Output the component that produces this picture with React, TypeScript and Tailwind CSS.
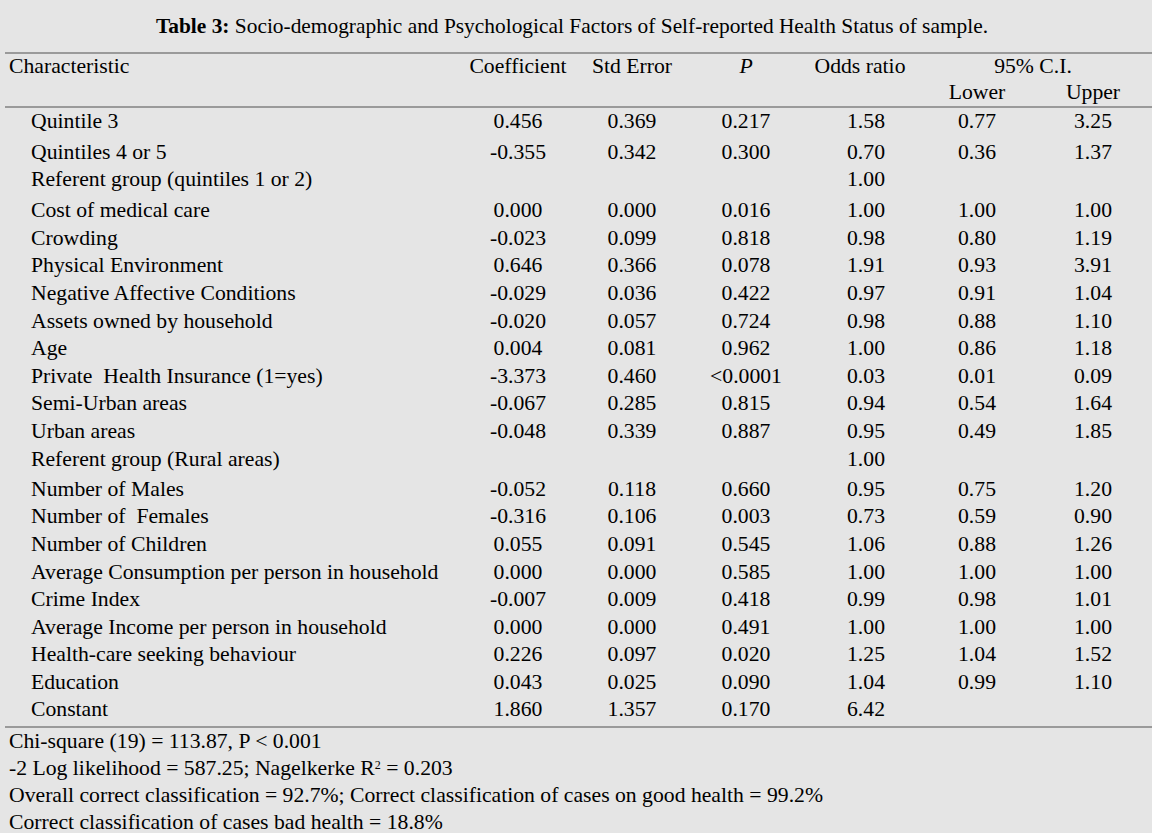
import React from 'react';

type Row = {
  label: string;
  values: string[];
  gap?: string;
};

const rows: Row[] = [
  { label: 'Quintile 3', values: ['0.456', '0.369', '0.217', '1.58', '0.77', '3.25'] },
  { label: 'Quintiles 4 or 5', values: ['-0.355', '0.342', '0.300', '0.70', '0.36', '1.37'], gap: 'mt-[4px]' },
  { label: 'Referent group (quintiles 1 or 2)', values: ['', '', '', '1.00', '', ''], gap: '-mt-[1px]' },
  { label: 'Cost of medical care', values: ['0.000', '0.000', '0.016', '1.00', '1.00', '1.00'], gap: 'mt-[4px]' },
  { label: 'Crowding', values: ['-0.023', '0.099', '0.818', '0.98', '0.80', '1.19'] },
  { label: 'Physical Environment', values: ['0.646', '0.366', '0.078', '1.91', '0.93', '3.91'] },
  { label: 'Negative Affective Conditions', values: ['-0.029', '0.036', '0.422', '0.97', '0.91', '1.04'] },
  { label: 'Assets owned by household', values: ['-0.020', '0.057', '0.724', '0.98', '0.88', '1.10'] },
  { label: 'Age', values: ['0.004', '0.081', '0.962', '1.00', '0.86', '1.18'] },
  { label: 'Private  Health Insurance (1=yes)', values: ['-3.373', '0.460', '<0.0001', '0.03', '0.01', '0.09'] },
  { label: 'Semi-Urban areas', values: ['-0.067', '0.285', '0.815', '0.94', '0.54', '1.64'] },
  { label: 'Urban areas', values: ['-0.048', '0.339', '0.887', '0.95', '0.49', '1.85'] },
  { label: 'Referent group (Rural areas)', values: ['', '', '', '1.00', '', ''] },
  { label: 'Number of Males', values: ['-0.052', '0.118', '0.660', '0.95', '0.75', '1.20'], gap: 'mt-[2.5px]' },
  { label: 'Number of  Females', values: ['-0.316', '0.106', '0.003', '0.73', '0.59', '0.90'] },
  { label: 'Number of Children', values: ['0.055', '0.091', '0.545', '1.06', '0.88', '1.26'] },
  { label: 'Average Consumption per person in household', values: ['0.000', '0.000', '0.585', '1.00', '1.00', '1.00'] },
  { label: 'Crime Index', values: ['-0.007', '0.009', '0.418', '0.99', '0.98', '1.01'] },
  { label: 'Average Income per person in household', values: ['0.000', '0.000', '0.491', '1.00', '1.00', '1.00'] },
  { label: 'Health-care seeking behaviour', values: ['0.226', '0.097', '0.020', '1.25', '1.04', '1.52'] },
  { label: 'Education', values: ['0.043', '0.025', '0.090', '1.04', '0.99', '1.10'] },
  { label: 'Constant', values: ['1.860', '1.357', '0.170', '6.42', '', ''] },
];

// label | coef | se | p | odds | lower | upper
const grid = 'grid grid-cols-[456px_114px_114px_114px_114px_120px_112px]';

function Rule() {
  return <div className="h-[2px] bg-[#9a9a9a]" />;
}

export default function App() {
  return (
    <div
      className="w-full h-[833px] overflow-hidden bg-[#e5e5e5] text-black text-[21.7px]"
      style={{ fontFamily: '"Liberation Serif", "Times New Roman", serif' }}
    >
      <h1 className="pt-[13px] leading-[27.5px] text-center pr-[8px] text-[21.4px]">
        <span className="font-bold">Table 3:</span> Socio-demographic and Psychological Factors of Self-reported
        Health Status of sample.
      </h1>

      <div className="ml-[5px] mt-[11px]">
        <Rule />

        {/* header */}
        <div className={`${grid} h-[26px] leading-[26px] -mt-[1px]`}>
          <div className="pl-[4px]">Characteristic</div>
          <div className="text-center">Coefficient</div>
          <div className="text-center">Std Error</div>
          <div className="text-center italic">P</div>
          <div className="text-center">Odds ratio</div>
          <div className="col-span-2 text-center">95% C.I.</div>
        </div>
        <div className={`${grid} h-[27px] leading-[27px]`}>
          <div className="col-span-5" />
          <div className="text-center">Lower</div>
          <div className="text-center">Upper</div>
        </div>

        <Rule />

        <div className="pb-[2px]">
          {rows.map((r) => (
            <div key={r.label} className={`${grid} h-[27.6px] leading-[27.6px] ${r.gap ?? ''}`}>
              <div className="pl-[26px] whitespace-pre">{r.label}</div>
              {r.values.map((v, i) => (
                <div key={i} className={i === 3 ? 'text-center pl-[12px]' : 'text-center'}>
                  {v}
                </div>
              ))}
            </div>
          ))}
        </div>

        <Rule />

        <div className="pl-[4px] leading-[27px]">
          <p>Chi-square (19) = 113.87, P &lt; 0.001</p>
          <p>
            -2 Log likelihood = 587.25; Nagelkerke R<sup className="text-[12px]">2</sup> = 0.203
          </p>
          <p>Overall correct classification = 92.7%; Correct classification of cases on good health = 99.2%</p>
          <p>Correct classification of cases bad health = 18.8%</p>
        </div>
      </div>
    </div>
  );
}
